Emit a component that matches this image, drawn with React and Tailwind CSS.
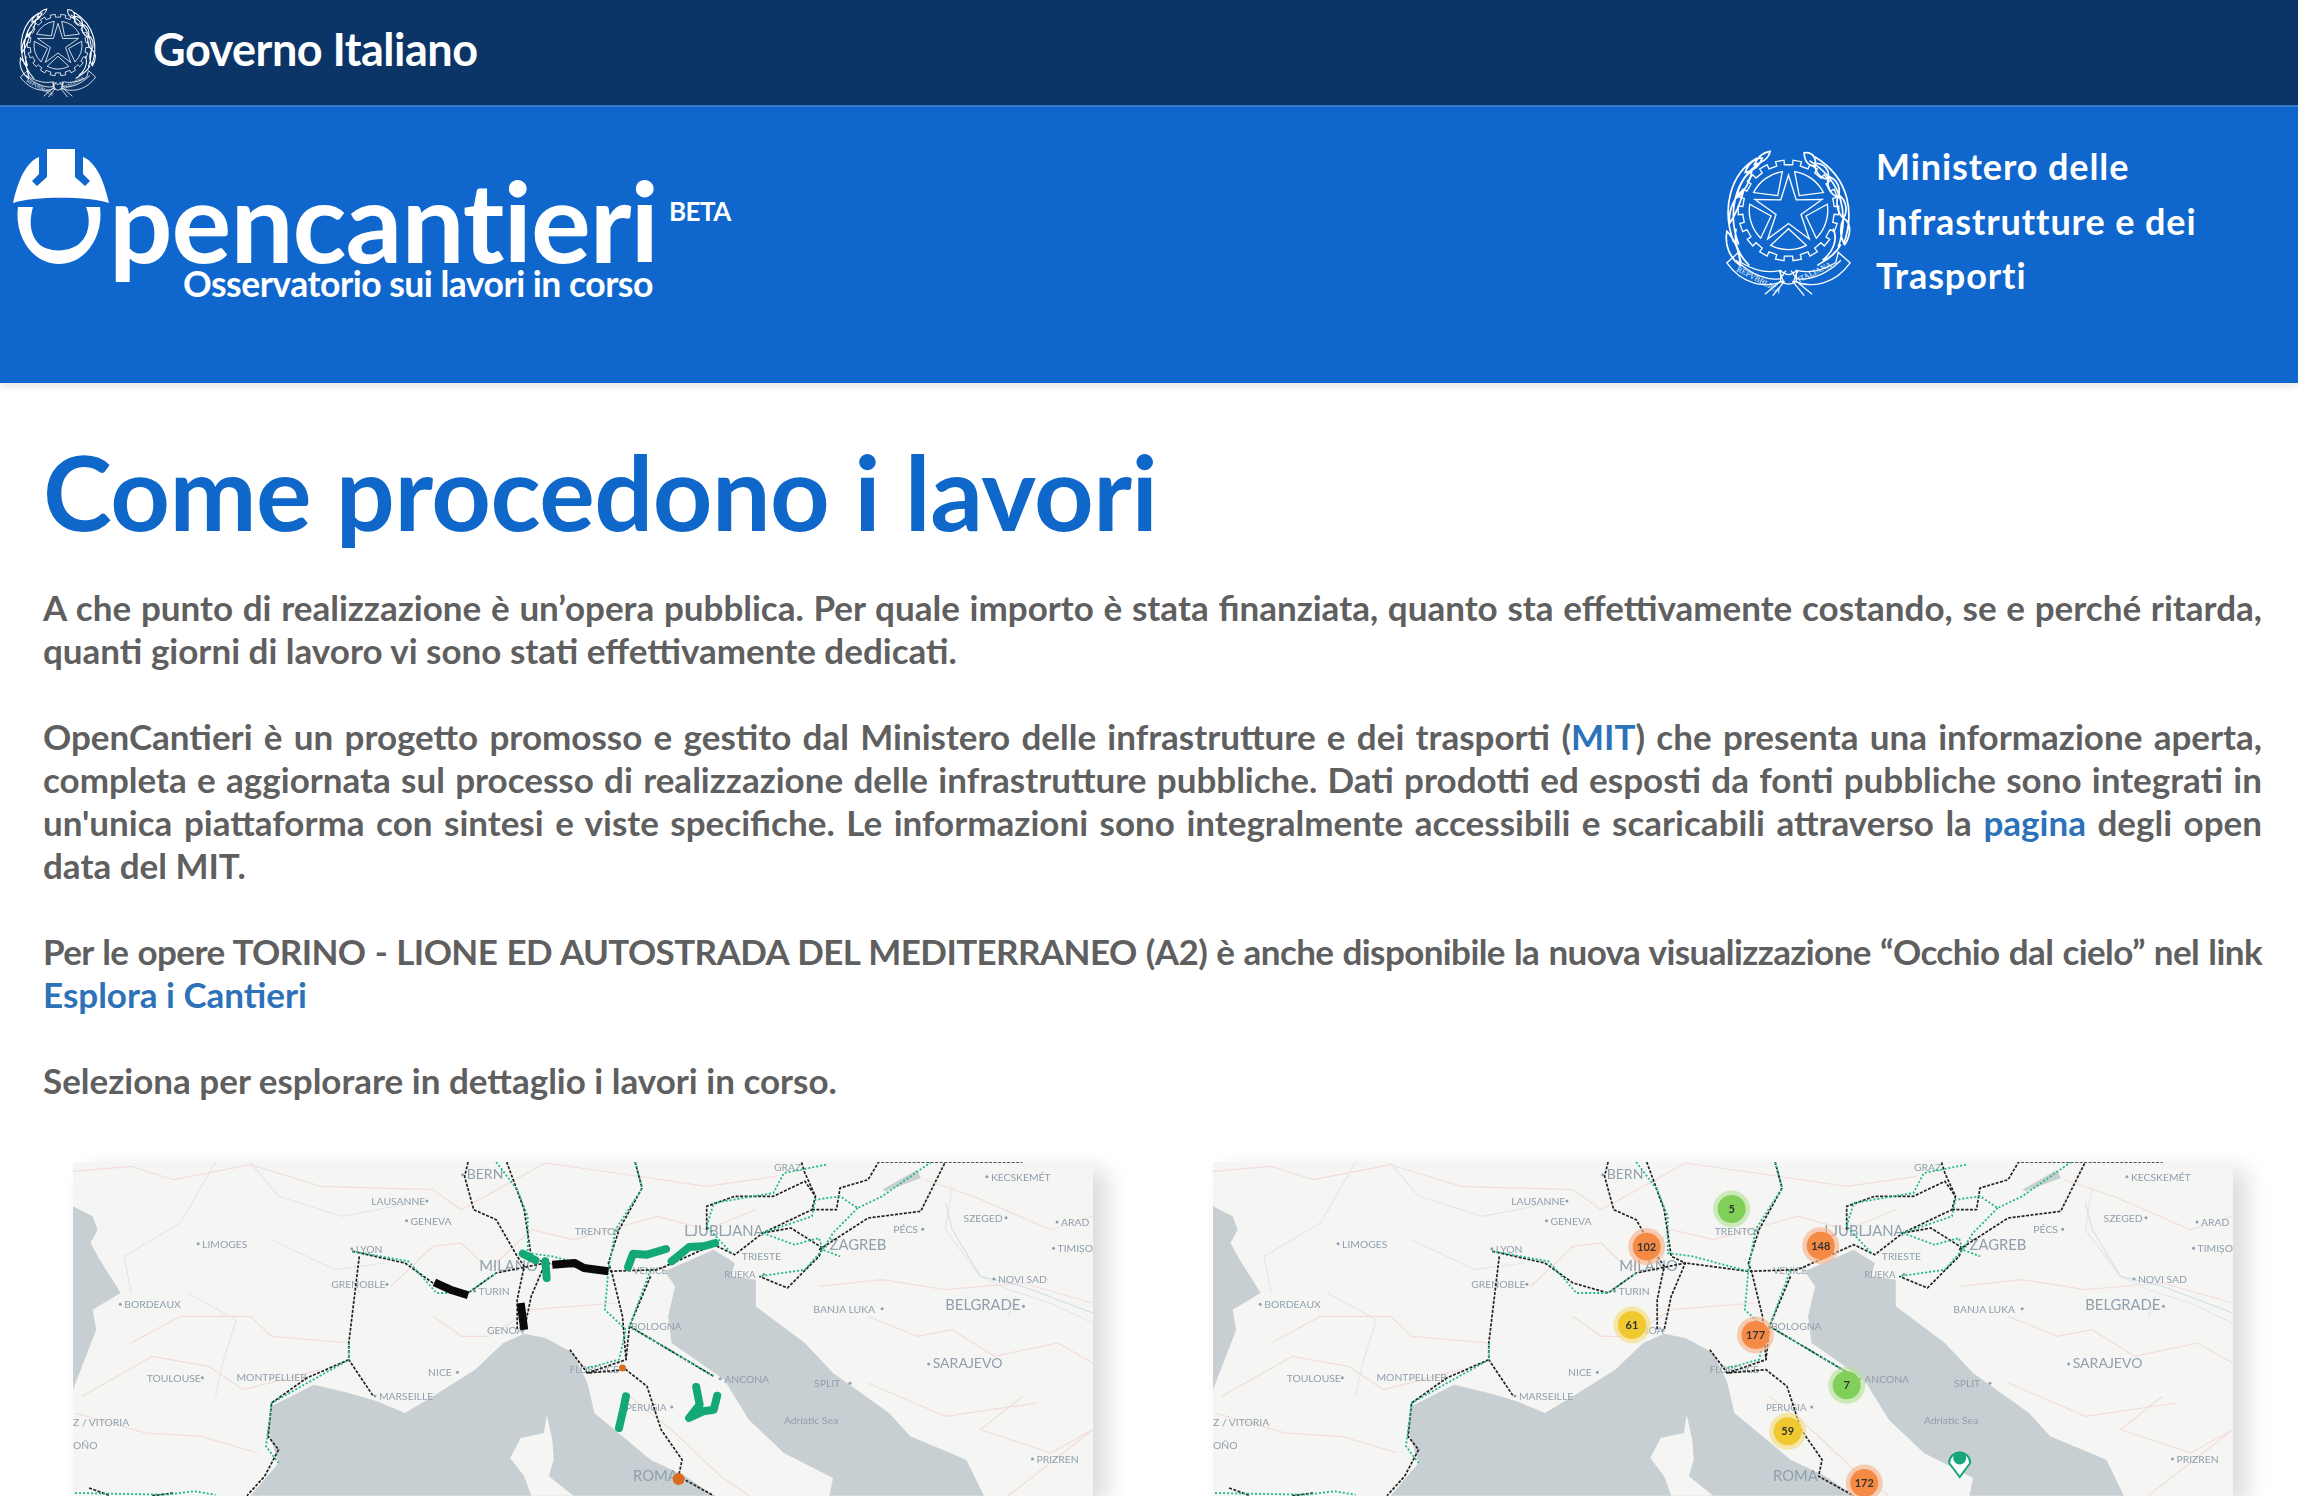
import React from "react";

const FONT = "font-['Lato','Noto_Sans',sans-serif]";
const t = (s) => s.trim().split(/\s+/).map((p) => { const [x, y] = p.split(",").map(Number); return `${((x - 47) / 1.425).toFixed(1)},${((y - 97) / 3).toFixed(1)}`; }).join(" ");
const X = (x) => (x - 47) / 1.425;
const Y = (y) => (y - 97) / 3;

const black = [
  "610,97 605,140 618,240 650,270 680,380 690,410 680,510 680,600",
  "665,97 690,240 700,380 720,400 700,500 690,600",
  "848,97 858,175 825,300 810,400 815,430 830,560 835,690",
  "445,365 520,400 560,460 610,490 650,430 720,400 810,425 880,420 960,345 990,375 1030,310 1100,240 1105,200 1090,130 1085,97",
  "455,380 440,640 440,690 475,800",
  "440,690 380,745 330,820 325,920 340,960 320,1040 295,1098",
  "950,300 950,230 990,200 1045,200 1090,155 1105,200",
  "1030,310 1070,295 1115,355 1110,380 1065,475 1025,440",
  "1100,240 1135,240 1140,175 1180,150 1195,97 1400,97",
  "1110,360 1180,265 1255,245 1290,97",
  "870,440 840,590 835,690 780,730 835,720 865,770 885,900 915,990 910,1040 960,1098",
  "840,590 960,740", "755,660 780,730", "70,1075 100,1098", "160,1098 190,1090",
];
const green = [
  "650,97 680,180 695,260 695,370 730,380 810,425",
  "445,365 525,395 565,490 610,490 650,430",
  "848,97 858,175 820,300 810,420 805,540 835,600 825,690 780,715",
  "440,640 440,690 330,820 322,950 340,1000",
  "1120,105 1060,130 1045,190 960,220 950,290 985,370",
  "1030,310 1075,345 1110,325 1115,360 1090,420 1025,440",
  "1270,97 1200,200 1165,235 1140,200 1105,210 1100,260 1030,310",
  "1165,235 1130,310 1115,360 1140,380",
  "870,420 840,590 960,740", "50,1090 180,1095 220,1085 250,1095",
];
const pink = [
  "47,125 130,110 190,150 300,105 400,170 560,180 600,240 720,100 820,130 950,170 1050,140",
  "60,800 160,680 240,710 290,780 400,720", "130,640 200,560 300,560 330,620 440,640",
  "500,470 560,350 600,340 640,420 700,300 760,330 880,260 950,300 1020,240",
  "560,560 600,620 640,620 700,540 820,520", "1110,470 1200,450 1290,480 1400,460 1500,520",
  "1180,560 1250,620 1300,600 1360,680 1450,640 1500,700", "1400,800 1340,900 1440,970 1500,900 1380,1098",
  "50,850 150,910 230,920 310,970", "1180,760 1290,860 1420,820", "840,800 900,900 970,1040 1010,1098",
  "1260,150 1330,200 1440,300 1500,260",
];
const gray = [
  "250,97 200,280 120,380 130,490", "300,100 340,200 430,260 530,220", "330,330 420,420 490,400",
  "210,490 280,570 260,700 250,800", "1300,170 1290,300 1340,440 1380,480 1440,520 1500,580", "1390,500 1380,560",
];
// [text, x, y, size, dot: -1 before / 1 after / 0 none]
const labels = [
  ["BERN", 608, 147, 19, -1], ["LAUSANNE", 472, 226, 14, 1], ["GENEVA", 528, 285, 14, -1], ["LIMOGES", 231, 354, 14, -1], ["LYON", 450, 369, 14, -1], ["TRENTO", 762, 315, 14, 1],
  ["LJUBLJANA", 918, 320, 20, 0], ["ZAGREB", 1125, 362, 20, -1], ["MILANO", 626, 424, 20, 0], ["TRIESTE", 1000, 391, 14, 0], ["VENICE", 845, 433, 13, 0], ["RIJEKA", 975, 446, 13, 1],
  ["GRENOBLE", 415, 476, 14, 1], ["TURIN", 625, 496, 14, -1], ["BORDEAUX", 120, 536, 14, -1], ["SZEGED", 1316, 276, 14, 1], ["PÉCS", 1216, 311, 14, 1], ["ARAD", 1455, 289, 14, -1], ["TIMIȘOA", 1450, 368, 14, -1],
  ["NOVI SAD", 1365, 460, 14, -1], ["BANJA LUKA", 1102, 549, 14, 1], ["BELGRADE", 1290, 542, 20, 1], ["GENOA", 637, 614, 14, 1], ["BOLOGNA", 842, 600, 14, 0], ["TOULOUSE", 152, 756, 14, 1], ["MONTPELLIER", 280, 755, 14, 0],
  ["NICE", 553, 740, 14, 1], ["FLORENCE", 755, 730, 13, 0], ["ANCONA", 975, 759, 14, -1], ["SARAJEVO", 1272, 715, 19, -1], ["SPLIT", 1103, 773, 14, 1], ["MARSEILLE", 483, 811, 14, -1], ["PERUGIA", 835, 844, 13, 1],
  ["Adriatic Sea", 1060, 884, 14, 0], ["PRIZREN", 1420, 1000, 14, -1], ["ROMA", 845, 1055, 20, 0], ["Z / VITORIA", 47, 890, 14, 0], ["OÑO", 47, 957, 14, 0], ["KECSKEMÉT", 1355, 153, 14, -1], ["GRAZ", 1046, 123, 14, 0],
];

const Polys = ({ list, stroke, width, dash, cap = "butt", opacity = 1 }) => list.map((p, i) => (
  <polyline key={i} points={t(p)} fill="none" stroke={stroke} strokeWidth={width} strokeDasharray={dash} strokeLinecap={cap} strokeLinejoin="round" opacity={opacity} />
));

const Cluster = ({ x, y, n, c, h }) => (
  <g>
    <circle cx={X(x)} cy={Y(y)} r="18.5" fill={h} opacity=".65" />
    <circle cx={X(x)} cy={Y(y)} r="14" fill={c} />
    <text x={X(x)} y={Y(y) + 4} textAnchor="middle" fontSize="11" fontWeight="700" fontFamily="Lato, sans-serif" fill="#333">{n}</text>
  </g>
);

function ItalyMap({ clusters }) {
  return (
    <div className="w-[1020px] h-[334px] shrink-0 bg-[#f5f5f4] shadow-[14px_8px_22px_rgba(0,0,0,0.14)]">
      <svg viewBox="0 0 1020 334" width="1020" height="334" className="block blur-[0.5px]">
        <polygon fill="#c8cfd2" points={t("47,230 75,260 82,300 72,340 85,390 115,490 75,540 80,600 47,780")} />
        <polygon fill="#c8cfd2" points={t("300,1098 340,1000 325,900 330,830 390,765 440,790 480,815 520,850 560,800 620,720 660,640 690,612 720,625 760,670 780,760 790,850 830,920 870,990 920,1040 960,1098")} />
        <polygon fill="#c8cfd2" points={t("960,360 990,400 985,440 1020,450 1020,530 1090,640 1130,730 1210,850 1240,920 1320,990 1345,1098 1125,1098 1130,1045 1060,970 1010,870 975,750 900,640 895,560 905,470 890,425")} />
        <polygon fill="#f5f5f4" points={t("722,855 718,910 685,925 670,985 690,1040 700,1098 760,1098 725,1040 732,990 730,930")} />
        <polygon fill="#c8cfd2" points={t("1200,180 1250,120 1255,145 1205,185")} />
        <Polys list={pink} stroke="#f2dcdc" width="1.2" />
        <Polys list={gray} stroke="#e4e6e6" width="1.2" />
        <polyline points={t("1290,220 1300,300 1340,440 1400,470 1500,550")} fill="none" stroke="#c9dce8" strokeWidth="1" />
        {labels.map(([s, x, y, f, d]) => (
          <g key={s} fill="#8f9fac">
            <text x={X(x)} y={Y(y)} fontSize={f * 0.74} fontFamily="Lato, sans-serif">{s}</text>
            {d !== 0 && <circle cx={d < 0 ? X(x) - 4 : X(x) + s.length * f * 0.47 + 3} cy={Y(y) - 4} r="1.5" />}
          </g>
        ))}
        <Polys list={black} stroke="#222" width="1.7" dash="3 1.5" />
        <Polys list={green} stroke="#1eb889" width="1.8" dash="2 2" />
        {!clusters && (
          <>
            <Polys list={["838,412 845,372 865,375 892,358", "900,395 925,352 945,350 962,340", "688,372 706,392", "720,395 722,445", "835,800 830,850 825,895", "935,772 940,825 925,865 945,845 960,840 965,798"]} stroke="#13a876" width="8" cap="round" />
            <Polys list={["562,458 585,480 610,497", "730,405 762,400 775,415 810,425", "685,520 690,600"]} stroke="#0a0a0a" width="8" />
            <circle cx={X(830)} cy={Y(715)} r="3.5" fill="#d96a20" />
            <circle cx={X(910)} cy={Y(1048)} r="6" fill="#d96a20" />
          </>
        )}
        {clusters && (
          <>
            <Cluster x={786} y={238} n="5" c="#80cf58" h="#b3e29a" />
            <Cluster x={665} y={351} n="102" c="#f58a45" h="#f8b48c" />
            <Cluster x={913} y={348} n="148" c="#f58a45" h="#f8b48c" />
            <Cluster x={644} y={586} n="61" c="#efc92f" h="#f5dd7e" />
            <Cluster x={820} y={616} n="177" c="#f58a45" h="#f8b48c" />
            <Cluster x={950} y={767} n="7" c="#80cf58" h="#b3e29a" />
            <Cluster x={866} y={905} n="59" c="#efc92f" h="#f5dd7e" />
            <Cluster x={975} y={1060} n="172" c="#f58a45" h="#f8b48c" />
            <path d={`M${X(1111)} ${Y(1042)} L${X(1096)} ${Y(1000)} A10.5 10.5 0 1 1 ${X(1126)} ${Y(1000)} Z`} fill="#fff" stroke="#15a679" strokeWidth="2" />
            <circle cx={X(1111)} cy={Y(985)} r="6.5" fill="#15a679" />
          </>
        )}
      </svg>
    </div>
  );
}

function Emblem({ size, h }) {
  const star = [];
  for (let i = 0; i < 10; i++) {
    const r = i % 2 ? 10 : 27, a = -Math.PI / 2 + (i * Math.PI) / 5;
    star.push(`${50 + r * Math.cos(a)},${46 + r * Math.sin(a)}`);
  }
  const gear = [];
  for (let i = 0; i < 18; i++) {
    const a0 = (i * Math.PI) / 9, d = 0.085;
    for (const [r, a] of [[35, a0 - d], [38.5, a0 - d], [38.5, a0 + d], [35, a0 + d]]) gear.push(`${50 + r * Math.cos(a)},${46 + r * Math.sin(a)}`);
  }
  const sector = (deg) => {
    const p = (r, d) => { const a = ((d - 90) * Math.PI) / 180; return `${(50 + r * Math.cos(a)).toFixed(1)} ${(46 + r * Math.sin(a)).toFixed(1)}`; };
    return `M${p(14, deg)} L${p(30, deg - 27)} A30 30 0 0 1 ${p(30, deg + 27)} Z`;
  };
  return (
    <svg viewBox="0 0 100 112" width={size} height={h} fill="none" stroke="#fff" strokeWidth="1" className="shrink-0 block">
      <polygon points={star.join(" ")} />
      <polygon points={gear.join(" ")} />
      {[36, 108, 180, 252, 324].map((d) => <path key={d} d={sector(d)} />)}
      <path strokeWidth="1.3" d="M8 70 C-1 45 5 18 26 6 M12 72 C3 48 9 22 28 10 M16 30 C10 34 4 44 5 56 C9 50 13 42 16 30Z M22 16 C17 19 11 28 11 36 C16 32 21 24 22 16Z M30 6 C25 6 19 10 17 17 C23 16 28 12 30 6Z M3 62 C1 72 5 82 13 88 C13 78 9 68 3 62Z M10 60 C8 70 12 80 20 88 M36 1 C30 2 26 6 24 11 C30 10 35 6 36 1Z" />
      <path strokeWidth="1.3" d="M92 72 C100 50 98 22 70 5 M88 74 C96 50 92 24 66 8 M62 2 C68 1 72 6 70 12 C65 12 62 8 62 2Z M70 10 C78 10 82 16 80 22 C74 22 70 16 70 10Z M80 20 C88 22 90 30 88 36 C82 34 79 28 80 20Z M88 34 C95 38 95 48 92 52 C87 48 86 40 88 34Z M92 52 C99 56 97 66 93 72 C89 66 89 58 92 52Z M90 72 C86 80 78 84 72 88 M84 60 C88 68 84 78 76 84" />
      <path d="M10 84 C22 96 36 100 44 98 L48 92 M90 84 C78 96 64 100 56 98 L52 92 M3 86 L12 78 L14 86 C24 92 34 94 43 92 L46 100 C32 106 14 102 3 86Z M97 86 L88 78 L86 86 C76 92 66 94 57 92 L54 100 C68 106 86 102 97 86Z M44 100 L32 110 M56 100 L68 110 M47 100 L38 111 M53 100 L62 111" />
      <path d="M44 92 C48 96 52 96 56 92 L56 100 C52 103 48 103 44 100Z" />
      <g stroke="none" fill="#fff" fontFamily="'Liberation Serif', serif" fontSize="6">
        <text x="10" y="92" transform="rotate(28 10 92)">REPVBBLICA</text>
        <text x="58" y="101" transform="rotate(-26 58 101)">ITALIANA</text>
      </g>
    </svg>
  );
}

function Helmet() {
  return (
    <svg viewBox="0 0 96 115" width="96" height="115" className="shrink-0 block" fill="#fff">
      <path d="M34 0 H62 V28 L72 37 L77 32 L70 25 V8 C82 13 90 28 96 54 C76 47 20 47 0 54 C6 28 14 13 26 8 V25 L19 32 L24 37 L34 28 Z" />
      <path fillRule="evenodd" d="M5 58 H20 C16 72 17 85 25 94 C34 104 58 104 68 93 C76 85 78 70 73 58 H87 C91 88 72 115 46 115 C20 115 1 88 5 58 Z" />
    </svg>
  );
}

const Line = ({ children, last, cls = "" }) => (
  <div className={`${last ? "" : "[text-align:justify] [text-align-last:justify]"} ${cls}`}>{children}</div>
);
const A = ({ children }) => <a className="text-[#2d72b8]">{children}</a>;

export default function App() {
  return (
    <div className={`h-[1496px] overflow-hidden bg-white ${FONT}`}>
      <div className="h-[107px] bg-[#0b3567] border-b-[2px] border-[#3a7ccf] flex items-center">
        <div className="ml-[18px]"><Emblem size={80} h={90} /></div>
        <span className="ml-[55px] mb-[7px] text-[45px] font-bold text-white leading-none tracking-[-0.5px]">Governo Italiano</span>
      </div>
      <header className="h-[276px] bg-[#0f67cd] flex justify-between shadow-[0_3px_8px_rgba(0,0,0,0.12)] relative">
        <div className="pl-[13px] pt-[42px] flex items-start">
          <Helmet />
          <div className="flex flex-col items-end">
            <div className="flex items-start text-white mt-[15px]">
              <span className="text-[112px] leading-[112px] font-bold tracking-[-1px]">pencantieri</span>
              <span className="ml-[11px] mt-[34px] text-[26px] leading-none font-bold tracking-[-0.5px]">BETA</span>
            </div>
            <div className="self-end mr-[78px] mt-[-10px] text-[35.5px] leading-none font-bold text-white tracking-[-0.5px]">Osservatorio sui lavori in corso</div>
          </div>
        </div>
        <div className="flex items-start pt-[43px] pr-[72px]">
          <Emblem size={131} h={147} />
          <div className="ml-[22px] mt-[-11px] w-[350px] text-[36px] leading-[54.5px] font-bold text-white tracking-[0.9px]">
            <div>Ministero delle</div><div>Infrastrutture e dei</div><div>Trasporti</div>
          </div>
        </div>
      </header>
      <main className="px-[43px]">
        <h1 className="mt-[48px] text-[#0f68c9] text-[104px] leading-[120px] font-bold tracking-[-0.5px]">Come procedono i lavori</h1>
        <div className="mt-[35px] w-[2219px] text-[35px] leading-[43px] font-bold text-[#5f5f5f]">
          <Line>A che punto di realizzazione è un’opera pubblica. Per quale importo è stata finanziata, quanto sta effettivamente costando, se e perché ritarda,</Line>
          <Line last>quanti giorni di lavoro vi sono stati effettivamente dedicati.</Line>
          <div className="h-[43px]" />
          <Line>OpenCantieri è un progetto promosso e gestito dal Ministero delle infrastrutture e dei trasporti (<A>MIT</A>) che presenta una informazione aperta,</Line>
          <Line>completa e aggiornata sul processo di realizzazione delle infrastrutture pubbliche. Dati prodotti ed esposti da fonti pubbliche sono integrati in</Line>
          <Line>un'unica piattaforma con sintesi e viste specifiche. Le informazioni sono integralmente accessibili e scaricabili attraverso la <A>pagina</A> degli open</Line>
          <Line last>data del MIT.</Line>
          <div className="h-[43px]" />
          <Line cls="tracking-[-0.6px] whitespace-nowrap">Per le opere TORINO - LIONE ED AUTOSTRADA DEL MEDITERRANEO (A2) è anche disponibile la nuova visualizzazione “Occhio dal cielo” nel link</Line>
          <Line last><A>Esplora i Cantieri</A></Line>
          <div className="h-[43px]" />
          <Line last>Seleziona per esplorare in dettaglio i lavori in corso.</Line>
        </div>
        <div className="mt-[60px] ml-[30px] flex gap-[120px]">
          <ItalyMap />
          <ItalyMap clusters />
        </div>
      </main>
    </div>
  );
}
